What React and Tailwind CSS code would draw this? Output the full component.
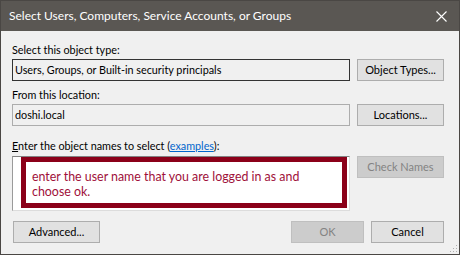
import React from "react";

const font = { fontFamily: 'Lato, "Liberation Sans", Arial, sans-serif' };

function Btn({ children, w, disabled, className = "" }) {
  return (
    <div
      className={`flex items-center justify-center h-[22px] border text-[11px] ${
        disabled
          ? "bg-[#cccccc] border-[#bfbfbf] text-[#838383]"
          : "bg-[#e1e1e1] border-[#adadad] text-black"
      } ${w} ${className}`}
    >
      {children}
    </div>
  );
}

export default function App() {
  return (
    <div
      className="w-[460px] h-[255px] border border-[#4a4744] bg-[#f0f0f0] flex flex-col relative overflow-hidden"
      style={font}
    >
      <div className="h-[30px] bg-[#5a5753] flex items-center justify-between pl-[8px] pr-[12px] shrink-0">
        <span className="text-white text-[12px]">
          Select Users, Computers, Service Accounts, or Groups
        </span>
        <svg width="11" height="11" viewBox="0 0 11 11" className="mt-[1px]">
          <path d="M0.5 0.5 L10.5 10.5 M10.5 0.5 L0.5 10.5" stroke="#ffffff" strokeWidth="1.1" />
        </svg>
      </div>
      <div className="flex flex-col pl-[11px] text-[10.8px] text-black">
        <div className="h-[16px] leading-[16px] mt-[11px]">Select this object type:</div>
        <div className="flex mt-[1px] gap-[7px]">
          <div className="w-[338px] h-[22px] border border-[#333333] bg-[#f0f0f0] flex items-center pl-[2px]">
            Users, Groups, or Built-in security principals
          </div>
          <Btn w="w-[87px]">Object Types...</Btn>
        </div>
        <div className="h-[16px] leading-[16px] mt-[6px]">From this location:</div>
        <div className="flex mt-[1px] gap-[7px]">
          <div className="w-[338px] h-[22px] border border-[#adadad] bg-[#f0f0f0] flex items-center pl-[2px]">
            doshi.local
          </div>
          <Btn w="w-[87px]">Locations...</Btn>
        </div>
        <div className="h-[16px] leading-[16px] mt-[12px]">
          <span className="underline">E</span>nter the object names to select (
          <span className="text-[#0066cc] underline">examples</span>):
        </div>
        <div className="flex mt-[2px] gap-[7px] items-start">
          <div className="w-[338px] h-[55px] border border-t-[#828282] border-l-[#9a9a9a] border-r-[#dcdcdc] border-b-[#dcdcdc] bg-white pl-[8px] pr-[2px] pb-[2px] flex">
            <div className="flex-1 border-[5px] border-[#8b0019] bg-white pl-[6px] pt-[7px] text-[12.4px] leading-[15px] text-[#a0103a]">
              enter the user name that you are logged in as and
              <br />
              choose ok.
            </div>
          </div>
          <Btn w="w-[87px]" disabled>
            Check Names
          </Btn>
        </div>
        <div className="flex mt-[10px] items-center">
          <Btn w="w-[87px]" className="ml-[1px]">
            Advanced...
          </Btn>
          <Btn w="w-[73px]" disabled className="ml-[191px]">
            OK
          </Btn>
          <Btn w="w-[73px]" className="ml-[7px]">
            Cancel
          </Btn>
        </div>
      </div>
      <svg width="8" height="8" viewBox="0 0 8 8" className="absolute right-[1px] bottom-[1px]">
        <rect x="6" y="0" width="1" height="1" fill="#b0b0b0" />
        <rect x="3" y="3" width="1" height="1" fill="#b0b0b0" />
        <rect x="6" y="3" width="1" height="1" fill="#b0b0b0" />
        <rect x="0" y="6" width="1" height="1" fill="#b0b0b0" />
        <rect x="3" y="6" width="1" height="1" fill="#b0b0b0" />
        <rect x="6" y="6" width="1" height="1" fill="#b0b0b0" />
      </svg>
    </div>
  );
}
